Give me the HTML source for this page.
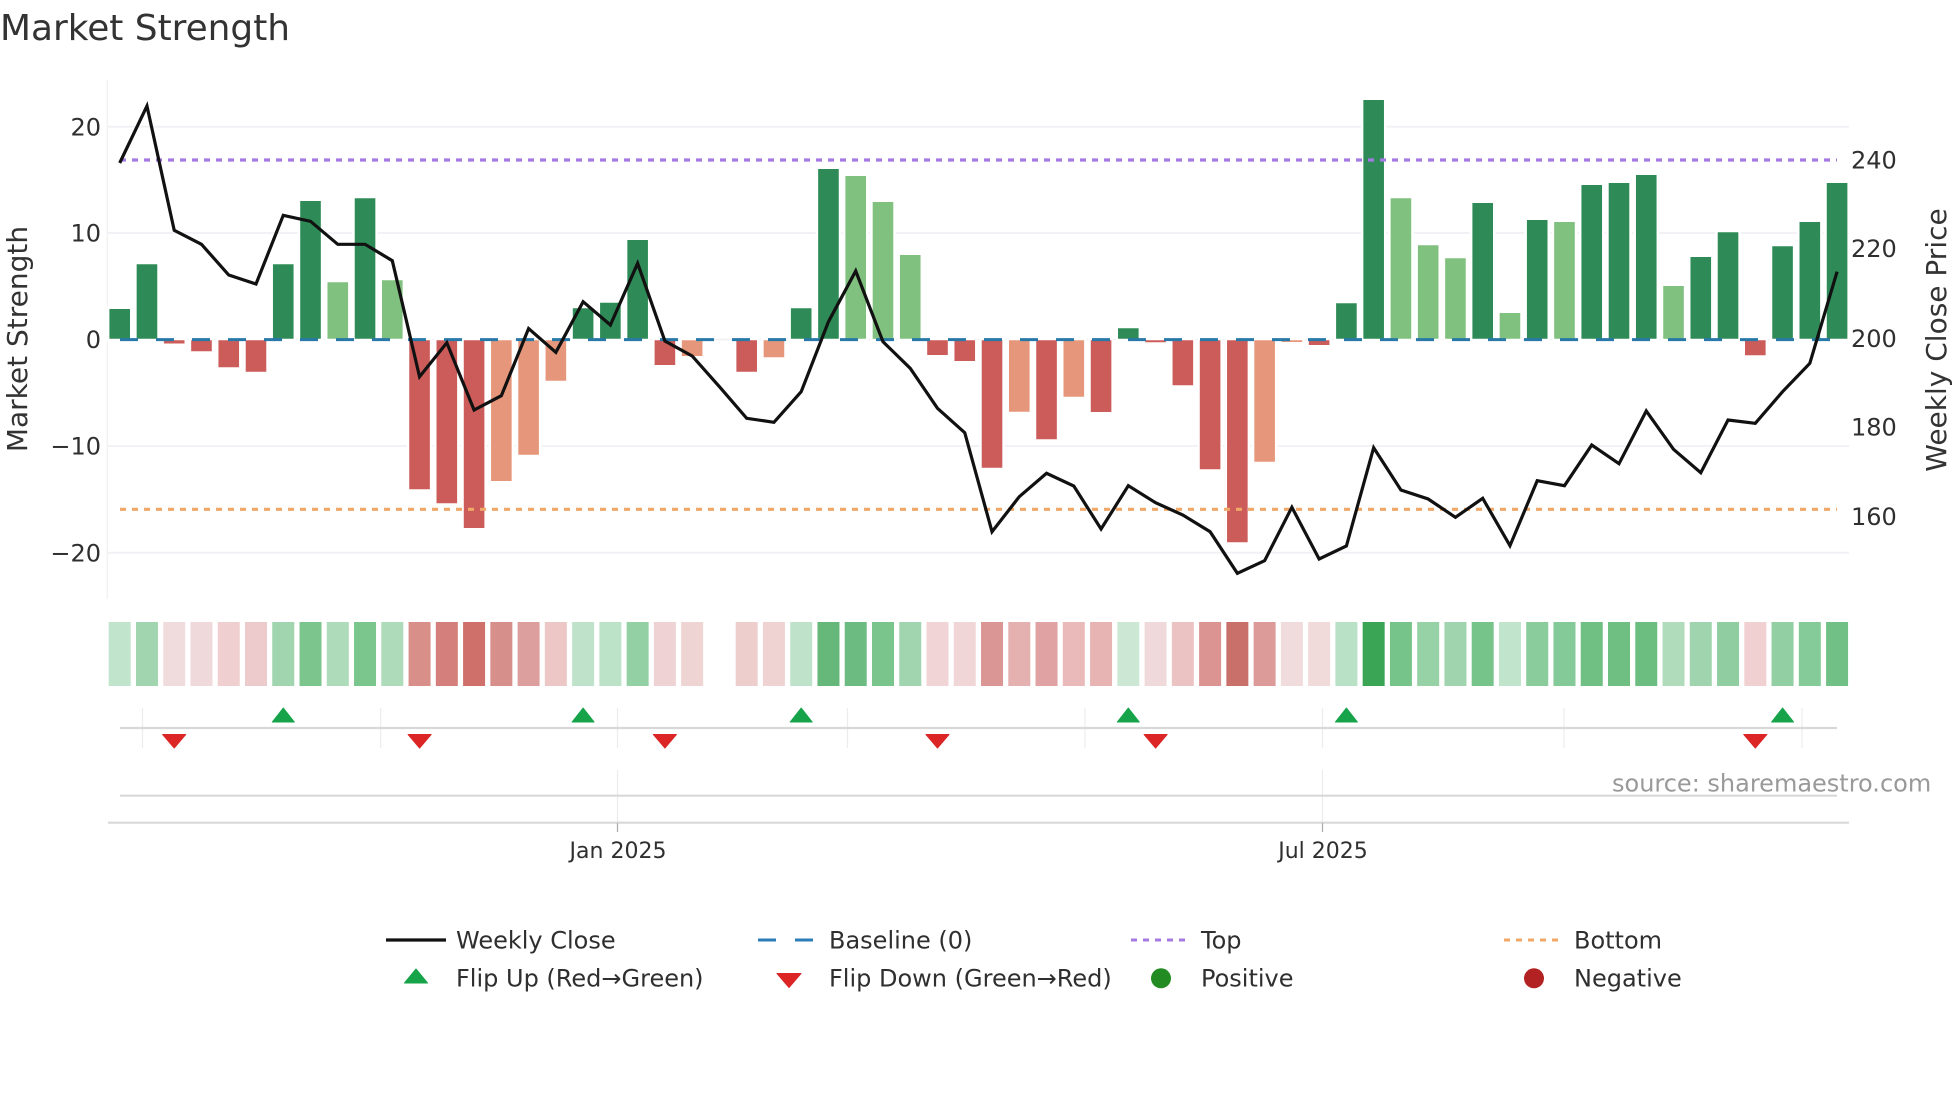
<!DOCTYPE html>
<html lang="en">
<head>
<meta charset="utf-8">
<title>Market Strength</title>
<style>
html,body{margin:0;padding:0;background:#fff;width:1960px;height:1102px;overflow:hidden}
svg{display:block}
text{font-family:"DejaVu Sans","Liberation Sans",sans-serif;fill:#333}
.t{font-size:24px;fill:#2f2f2f}
.l{font-size:24px;fill:#2f2f2f}
</style>
</head>
<body>
<svg width="1960" height="1102" viewBox="0 0 1960 1102" xmlns="http://www.w3.org/2000/svg">
<rect width="1960" height="1102" fill="#fff"/>
<text x="0" y="40" style="font-size:35.9px;fill:#333">Market Strength</text>

<!-- axis + grid -->
<path d="M107.3 80V599" stroke="#f0f0f2" stroke-width="1.2" fill="none"/>
<path d="M107.3 126.7H1849M107.3 233H1849M107.3 339.5H1849M107.3 446H1849M107.3 552.7H1849" stroke="#f1f1f5" stroke-width="1.8" fill="none"/>

<!-- bars -->
<g stroke="#fff" stroke-width="5" paint-order="stroke">
<path fill="#2e8b57" d="M109.4 309h20.6V338.7h-20.6zM136.66 264.3h20.6V338.7h-20.6zM272.96 264.3h20.6V338.7h-20.6zM300.22 201h20.6V338.7h-20.6zM354.74 198.3h20.6V338.7h-20.6zM572.82 308.3h20.6V338.7h-20.6zM600.08 302.7h20.6V338.7h-20.6zM627.34 240h20.6V338.7h-20.6zM790.9 308.3h20.6V338.7h-20.6zM818.16 169h20.6V338.7h-20.6zM1118.02 328.3h20.6V338.7h-20.6zM1336.1 303.3h20.6V338.7h-20.6zM1363.36 100h20.6V338.7h-20.6zM1472.4 203h20.6V338.7h-20.6zM1526.92 220h20.6V338.7h-20.6zM1581.44 185h20.6V338.7h-20.6zM1608.7 183h20.6V338.7h-20.6zM1635.96 175h20.6V338.7h-20.6zM1690.48 257h20.6V338.7h-20.6zM1717.74 232.3h20.6V338.7h-20.6zM1772.26 246.3h20.6V338.7h-20.6zM1799.52 222h20.6V338.7h-20.6zM1826.78 183h20.6V338.7h-20.6z"/>
<path fill="#81c17f" d="M327.48 282.3h20.6V338.7h-20.6zM382 280.3h20.6V338.7h-20.6zM845.42 176h20.6V338.7h-20.6zM872.68 202h20.6V338.7h-20.6zM899.94 255h20.6V338.7h-20.6zM1390.62 198.3h20.6V338.7h-20.6zM1417.88 245.3h20.6V338.7h-20.6zM1445.14 258.3h20.6V338.7h-20.6zM1499.66 313h20.6V338.7h-20.6zM1554.18 222h20.6V338.7h-20.6zM1663.22 286h20.6V338.7h-20.6z"/>
<path fill="#cb5c5a" d="M163.92 340.3h20.6V343.5h-20.6zM191.18 340.3h20.6V351.3h-20.6zM218.44 340.3h20.6V367.3h-20.6zM245.7 340.3h20.6V371.7h-20.6zM409.26 340.3h20.6V489.3h-20.6zM436.52 340.3h20.6V503.3h-20.6zM463.78 340.3h20.6V528h-20.6zM654.6 340.3h20.6V365h-20.6zM736.38 340.3h20.6V371.7h-20.6zM927.2 340.3h20.6V355h-20.6zM954.46 340.3h20.6V361h-20.6zM981.72 340.3h20.6V467.7h-20.6zM1036.24 340.3h20.6V439.3h-20.6zM1090.76 340.3h20.6V412h-20.6zM1145.28 340.3h20.6V342.3h-20.6zM1172.54 340.3h20.6V385.3h-20.6zM1199.8 340.3h20.6V469.3h-20.6zM1227.06 340.3h20.6V542.3h-20.6zM1308.84 340.3h20.6V345h-20.6zM1745 340.3h20.6V355.3h-20.6z"/>
<path fill="#e6967a" d="M491.04 340.3h20.6V481h-20.6zM518.3 340.3h20.6V454.7h-20.6zM545.56 340.3h20.6V380.7h-20.6zM681.86 340.3h20.6V356h-20.6zM763.64 340.3h20.6V357.3h-20.6zM1008.98 340.3h20.6V411.7h-20.6zM1063.5 340.3h20.6V396.7h-20.6zM1254.32 340.3h20.6V461.7h-20.6zM1281.58 340.3h20.6V342h-20.6z"/>
</g>

<!-- reference lines -->
<path d="M120 339.6H1836" stroke="#2878a8" stroke-width="3" stroke-dasharray="18 18" fill="none"/>
<path d="M120 160H1837" stroke="#a47be3" stroke-width="3.2" stroke-dasharray="6 6" fill="none"/>
<path d="M120 509.3H1837" stroke="#f0a868" stroke-width="3.2" stroke-dasharray="6 6" fill="none"/>

<!-- close line -->
<polyline fill="none" stroke="#111" stroke-width="3.2" stroke-linejoin="miter" points="119.7,163 146.96,106 174.22,230.3 201.48,244.3 228.74,275 256,284 283.26,215.3 310.52,221.3 337.78,244.3 365.04,244.3 392.3,260.7 419.56,376.7 446.82,342.7 474.08,410 501.34,395.7 528.6,328.5 555.86,352.3 583.12,301.7 610.38,325 637.64,263.3 664.9,341 692.16,356 719.42,386.7 746.68,418.3 773.94,422.3 801.2,391.7 828.46,321.7 855.72,271 882.98,341.7 910.24,368.3 937.5,408.3 964.76,432.7 992.02,531.7 1019.28,496.7 1046.54,473.3 1073.8,486 1101.06,529 1128.32,485.7 1155.58,502.7 1182.84,515 1210.1,531.7 1237.36,573.3 1264.62,560.7 1291.88,507.3 1319.14,559 1346.4,546 1373.66,447.7 1400.92,490 1428.18,499 1455.44,517.3 1482.7,498.3 1509.96,545.7 1537.22,480.7 1564.48,485.7 1591.74,445 1619,463.7 1646.26,411 1673.52,449.3 1700.78,472.7 1728.04,420 1755.3,423.3 1782.56,391.7 1809.82,363.3 1837.08,271.7"/>

<!-- left ticks -->
<g class="t" text-anchor="end">
<text class="t" x="101" y="135.4">20</text>
<text class="t" x="101" y="241.7">10</text>
<text class="t" x="101" y="348.2">0</text>
<text class="t" x="101" y="454.7">−10</text>
<text class="t" x="101" y="561.4">−20</text>
</g>
<!-- right ticks -->
<text class="t" x="1851" y="168.3">240</text>
<text class="t" x="1851" y="256.9">220</text>
<text class="t" x="1851" y="347.2">200</text>
<text class="t" x="1851" y="435.6">180</text>
<text class="t" x="1851" y="524.9">160</text>

<text transform="translate(27 339) rotate(-90)" text-anchor="middle" style="font-size:28px;fill:#333">Market Strength</text>
<text transform="translate(1946 340) rotate(-90)" text-anchor="middle" style="font-size:28px;fill:#333">Weekly Close Price</text>

<!-- heat strip -->
<g>
<rect x="108.7" y="622" width="22" height="64" fill="#c0e4cc"/>
<rect x="135.96" y="622" width="22" height="64" fill="#a1d5af"/>
<rect x="163.22" y="622" width="22" height="64" fill="#f1dcdd"/>
<rect x="190.48" y="622" width="22" height="64" fill="#efd9da"/>
<rect x="217.74" y="622" width="22" height="64" fill="#efcfd0"/>
<rect x="245" y="622" width="22" height="64" fill="#edcbcc"/>
<rect x="272.26" y="622" width="22" height="64" fill="#a1d5af"/>
<rect x="299.52" y="622" width="22" height="64" fill="#7cc68d"/>
<rect x="326.78" y="622" width="22" height="64" fill="#aedbb9"/>
<rect x="354.04" y="622" width="22" height="64" fill="#7bc68c"/>
<rect x="381.3" y="622" width="22" height="64" fill="#aedcba"/>
<rect x="408.56" y="622" width="22" height="64" fill="#d88e89"/>
<rect x="435.82" y="622" width="22" height="64" fill="#d47f7b"/>
<rect x="463.08" y="622" width="22" height="64" fill="#cf706b"/>
<rect x="490.34" y="622" width="22" height="64" fill="#d78f8b"/>
<rect x="517.6" y="622" width="22" height="64" fill="#dc9f9d"/>
<rect x="544.86" y="622" width="22" height="64" fill="#edc6c6"/>
<rect x="572.12" y="622" width="22" height="64" fill="#bfe3ca"/>
<rect x="599.38" y="622" width="22" height="64" fill="#bce2c8"/>
<rect x="626.64" y="622" width="22" height="64" fill="#93d0a3"/>
<rect x="653.9" y="622" width="22" height="64" fill="#efd2d3"/>
<rect x="681.16" y="622" width="22" height="64" fill="#efd4d4"/>
<rect x="735.68" y="622" width="22" height="64" fill="#eecdcd"/>
<rect x="762.94" y="622" width="22" height="64" fill="#efd3d3"/>
<rect x="790.2" y="622" width="22" height="64" fill="#bfe3ca"/>
<rect x="817.46" y="622" width="22" height="64" fill="#65b77a"/>
<rect x="844.72" y="622" width="22" height="64" fill="#6cbb80"/>
<rect x="871.98" y="622" width="22" height="64" fill="#7ac58c"/>
<rect x="899.24" y="622" width="22" height="64" fill="#a1d5af"/>
<rect x="926.5" y="622" width="22" height="64" fill="#f1d4d5"/>
<rect x="953.76" y="622" width="22" height="64" fill="#f0d6d6"/>
<rect x="981.02" y="622" width="22" height="64" fill="#da9695"/>
<rect x="1008.28" y="622" width="22" height="64" fill="#e5b0b0"/>
<rect x="1035.54" y="622" width="22" height="64" fill="#e0a2a2"/>
<rect x="1062.8" y="622" width="22" height="64" fill="#eab9b9"/>
<rect x="1090.06" y="622" width="22" height="64" fill="#e7b3b3"/>
<rect x="1117.32" y="622" width="22" height="64" fill="#cce8d5"/>
<rect x="1144.58" y="622" width="22" height="64" fill="#f0d9da"/>
<rect x="1171.84" y="622" width="22" height="64" fill="#ebc3c2"/>
<rect x="1199.1" y="622" width="22" height="64" fill="#db9492"/>
<rect x="1226.36" y="622" width="22" height="64" fill="#c9706b"/>
<rect x="1253.62" y="622" width="22" height="64" fill="#dc9a99"/>
<rect x="1280.88" y="622" width="22" height="64" fill="#f0dcdc"/>
<rect x="1308.14" y="622" width="22" height="64" fill="#f0dada"/>
<rect x="1335.4" y="622" width="22" height="64" fill="#b9e1c6"/>
<rect x="1362.66" y="622" width="22" height="64" fill="#3aa655"/>
<rect x="1389.92" y="622" width="22" height="64" fill="#77c48a"/>
<rect x="1417.18" y="622" width="22" height="64" fill="#97d1a6"/>
<rect x="1444.44" y="622" width="22" height="64" fill="#a0d4ae"/>
<rect x="1471.7" y="622" width="22" height="64" fill="#77c48a"/>
<rect x="1498.96" y="622" width="22" height="64" fill="#c1e4cd"/>
<rect x="1526.22" y="622" width="22" height="64" fill="#8bcc9c"/>
<rect x="1553.48" y="622" width="22" height="64" fill="#84c998"/>
<rect x="1580.74" y="622" width="22" height="64" fill="#70c084"/>
<rect x="1608" y="622" width="22" height="64" fill="#6fbf83"/>
<rect x="1635.26" y="622" width="22" height="64" fill="#6bbd80"/>
<rect x="1662.52" y="622" width="22" height="64" fill="#b0dcbb"/>
<rect x="1689.78" y="622" width="22" height="64" fill="#a0d4ae"/>
<rect x="1717.04" y="622" width="22" height="64" fill="#90cea1"/>
<rect x="1744.3" y="622" width="22" height="64" fill="#f0d0d1"/>
<rect x="1771.56" y="622" width="22" height="64" fill="#92cfa3"/>
<rect x="1798.82" y="622" width="22" height="64" fill="#85ca99"/>
<rect x="1826.08" y="622" width="22" height="64" fill="#71c085"/>
</g>

<!-- flip axis -->
<path d="M142.5 708V748M380.6 708V748M617.5 708V748M847.5 708V748M1085 708V748M1322.5 708V748M1564 708V748M1802 708V748" stroke="#ececf0" stroke-width="1.2" fill="none"/>
<path d="M120 728H1837" stroke="#d8d8d8" stroke-width="2.2" fill="none"/>
<g fill="#16a34a" stroke="#16a34a" stroke-width="1" stroke-linejoin="round">
<path d="M283.3 708l11 14h-22zM583.1 708l11 14h-22zM801.2 708l11 14h-22zM1128.3 708l11 14h-22zM1346.4 708l11 14h-22zM1782.6 708l11 14h-22z"/>
</g>
<g fill="#dc2626" stroke="#dc2626" stroke-width="1" stroke-linejoin="round">
<path d="M174.2 748l-11.5 -13.5h23zM419.6 748l-11.5 -13.5h23zM664.9 748l-11.5 -13.5h23zM937.5 748l-11.5 -13.5h23zM1155.6 748l-11.5 -13.5h23zM1755.3 748l-11.5 -13.5h23z"/>
</g>

<!-- lower axis -->
<path d="M617.5 770V823M1322.5 770V823" stroke="#ececf0" stroke-width="1.2" fill="none"/>
<path d="M120 795.7H1837" stroke="#d8d8d8" stroke-width="2.2" fill="none"/>
<path d="M108 822.7H1849" stroke="#d8d8d8" stroke-width="2.2" fill="none"/>
<path d="M617.5 823V832M1322.5 823V832" stroke="#aaa" stroke-width="1.2" fill="none"/>
<text x="618" y="858" text-anchor="middle" style="font-size:22px;fill:#2f2f2f">Jan 2025</text>
<text x="1323" y="858" text-anchor="middle" style="font-size:22px;fill:#2f2f2f">Jul 2025</text>
<text x="1612" y="791.7" style="font-size:24px;fill:#999">source: sharemaestro.com</text>

<!-- legend -->
<path d="M386 940H446" stroke="#111" stroke-width="3.2" fill="none"/>
<path d="M758 940H814" stroke="#2a7db8" stroke-width="3" stroke-dasharray="18 19" fill="none"/>
<path d="M1131 940H1187" stroke="#a47be3" stroke-width="3" stroke-dasharray="6 6" fill="none"/>
<path d="M1504 940H1560" stroke="#f0a868" stroke-width="3" stroke-dasharray="6 6" fill="none"/>
<path d="M416 969l11.5 14h-23z" fill="#16a34a" stroke="#16a34a" stroke-width="1" stroke-linejoin="round"/>
<path d="M789 987.5l-12 -14h24z" fill="#dc2626" stroke="#dc2626" stroke-width="1" stroke-linejoin="round"/>
<circle cx="1161" cy="978.3" r="10" fill="#228b22"/>
<circle cx="1534" cy="978.3" r="10" fill="#b22222"/>
<text class="l" x="456" y="948.3">Weekly Close</text>
<text class="l" x="829" y="948.3">Baseline (0)</text>
<text class="l" x="1201" y="948.3">Top</text>
<text class="l" x="1574" y="948.3">Bottom</text>
<text class="l" x="456" y="986.3">Flip Up (Red→Green)</text>
<text class="l" x="829" y="986.3">Flip Down (Green→Red)</text>
<text class="l" x="1201" y="986.3">Positive</text>
<text class="l" x="1574" y="986.3">Negative</text>
</svg>
</body>
</html>
